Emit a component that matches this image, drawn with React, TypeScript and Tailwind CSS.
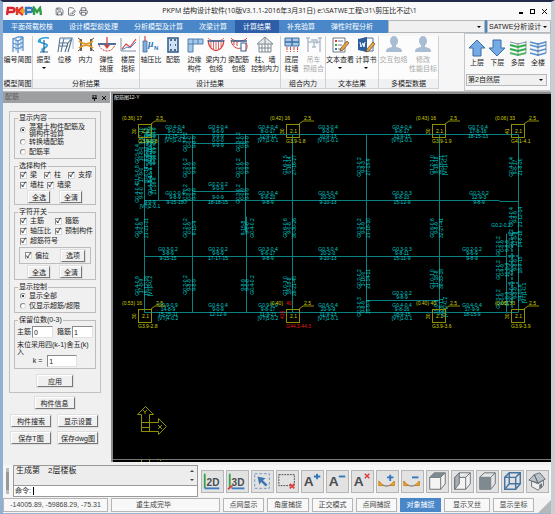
import { useState } from 'react'
import type { ReactNode } from 'react'
import { FilePenLine, Printer, Save } from 'lucide-react'
import clsx from 'clsx'

const TABS = ['平面荷载校核', '设计模型前处理', '分析模型及计算', '次梁计算', '计算结果', '补充验算', '弹性时程分析']

const NAVY = '#37618f'
const RED = '#d8403c'

const ICONS: Record<string, ReactNode> = {
  frame: (
    <g fill="none" stroke="#5b93cc" strokeWidth="1.3">
      <path d="M4 2v14M9 4v13M14 1v14M4 3l5 2 5-3M4 7l5 2 5-3M4 11l5 2 5-3M4 3l5-2h5" />
      <path d="M7 2v13M12 1v13" strokeWidth=".7" />
    </g>
  ),
  mode: (
    <g fill="none">
      <path d="M14 2C7 1 1 4 5 6s10 2 6 5-6 2-2 5" stroke="#2aa3dd" strokeWidth="1.6" />
      <path d="M9 4v12M5 16h8" stroke={NAVY} strokeWidth="1.2" />
      <path d="M2 6l4-3v4z" fill="#2aa3dd" />
    </g>
  ),
  shift: (
    <g fill="none" stroke="#56718f" strokeWidth="1.1">
      <path d="M4 2h12l-4 14M4 2L2 16M8 2L5 16M16 2l-4 5H4M3 10h9M12 7l-3 9" />
      <path d="M6 3h11v10" stroke="#8ab2dd" strokeWidth=".8" />
    </g>
  ),
  force: (
    <g fill="none">
      <path d="M4 3v12M14 3v12" stroke="#554839" strokeWidth="1.6" />
      <path d="M2 5c5 4 9 4 14 0M2 12c5-4 9-4 14 0" stroke="#e09a28" strokeWidth="1.7" />
      <path d="M1 2l4 3M17 2l-4 3M1 15l4-3M17 15l-4-3" stroke="#554839" />
    </g>
  ),
  deflect: (
    <g fill="none">
      <path d="M0 8h18" stroke={NAVY} strokeWidth="1.8" />
      <path d="M9 1v10" stroke={RED} strokeWidth="1.3" />
      <path d="M6 9h6l-3 4z" fill={RED} />
      <path d="M1 9c3 8 13 8 16 0" stroke={RED} strokeDasharray="2 1" />
    </g>
  ),
  chart: (
    <g fill="none">
      <path d="M2 2v13h15" stroke="#7d8fa5" />
      <path d="M3 13l4-5 4 3 6-8" stroke={RED} strokeWidth="1.2" />
      <path d="M3 14l5-3 3 1 6-6" stroke="#4a87c7" />
    </g>
  ),
  axial: (
    <g>
      <rect x="1" y="5" width="4" height="11" fill="#7db0df" stroke={NAVY} strokeWidth=".7" />
      <path d="M3 0v5" stroke={RED} strokeWidth="1.2" />
      <text x="6" y="11" fontSize="10" fontStyle="italic" fontWeight="bold" fill="#2d78bf" className="font-['Liberation_Serif',serif]">μ</text>
      <text x="12" y="14" fontSize="6" fontWeight="bold" fill="#2d78bf" className="font-['Liberation_Sans',sans-serif]">N</text>
    </g>
  ),
  rebar: (
    <g>
      <rect x="4" y="2" width="10" height="14" fill="#cfe2f4" stroke={NAVY} strokeWidth="1.6" />
      <path d="M6 4h2M10 4h2M6 14h2M10 14h2M6 9h1M11 9h1" stroke="#26415e" strokeWidth="1.6" />
    </g>
  ),
  edge: (
    <g>
      <path d="M2 3h15v5H7v8H2z" fill="#a6c9ea" stroke="#4e7fae" />
      <path d="M7 3v5H2M12 3v5" fill="none" stroke="#4e7fae" />
    </g>
  ),
  envelope: (
    <g fill="none" stroke={RED}>
      <path d="M1 4c1 14 15 14 16 0" strokeWidth="1.3" />
      <path d="M4 5v6M6.500 5v8M9 5v8M11.500 5v8M14 5v6M1 2c2 4 14 4 16 0" strokeWidth=".8" />
      <path d="M1 5h16" stroke={NAVY} strokeWidth="1.5" />
    </g>
  ),
  envelopeBar: (
    <g fill="none" stroke={RED}>
      <path d="M1 4c1 9 10 11 13 5M4 5v4M7 5v5M1 2c2 4 14 4 16 0" />
      <path d="M1 5h16" stroke={NAVY} strokeWidth="1.5" />
      <rect x="11" y="7" width="5" height="8" fill="#fff" stroke={NAVY} />
      <path d="M16 7c2 3 1 6-1 8" />
    </g>
  ),
  house: (
    <g fill="none" stroke="#7e8993">
      <path d="M1 8l8-7 8 7z" fill="#e6e9ec" />
      <path d="M3 8v8h12V8M9 1v15M6 8v8M12 8v8M3 12h12" />
    </g>
  ),
  ground: (
    <g>
      <path d="M2 2h14v8H2z" fill="#a6c9ea" stroke="#3d6fa3" />
      <path d="M9 2v8M2 6h14" stroke="#3d6fa3" strokeWidth="1.4" />
      <path d="M4 11v5M7.500 11v5M11 11v5M14.500 11v5" stroke={RED} strokeDasharray="3 1" />
    </g>
  ),
  crane: (
    <g fill="none" stroke="#aebccb" strokeWidth="1.4">
      <path d="M3 2v14M15 2v14M1 2h4M13 2h4M3 6h12M6 4h6v4M9 6v5M7 11h4" />
    </g>
  ),
  notes: (
    <g>
      <path d="M2 2h12v14H2z" fill="#fff" stroke="#707b86" />
      <path d="M4 5h2" stroke={RED} strokeWidth="2" />
      <path d="M4 9h2" stroke="#3aa64a" strokeWidth="2" />
      <path d="M4 13h2" stroke="#3d78c0" strokeWidth="2" />
      <path d="M7 5h5M7 9h4M7 13h3" stroke="#707b86" />
      <path d="M16 5l2 2-6 7-3 1 1-3z" fill="#eda63b" stroke="#5b4a2e" strokeWidth=".7" />
    </g>
  ),
  word: (
    <g>
      <path d="M7 2h9v13H7z" fill="#fff" stroke="#4c6f9e" />
      <path d="M1 3l9-2v15l-9-2z" fill="#2d5f9f" />
      <path d="M3 6l1 5 2-4 1 4 1-5" fill="none" stroke="#fff" />
      <path d="M16 6l2 2-6 7-3 1 1-3z" fill="#eda63b" stroke="#5b4a2e" strokeWidth=".7" />
    </g>
  ),
  person: (
    <g fill="#a9bdd2">
      <ellipse cx="9" cy="5" rx="4" ry="5" />
      <path d="M7 8h4v3c4 1 6 1 6 5H1c0-4 2-4 6-5z" />
    </g>
  ),
  up: <path d="M9 1l8 8h-4v8H5V9H1z" fill="#74abe4" stroke="#3d6da3" />,
  down: <path d="M9 17l8-8h-4V1H5v8H1z" fill="#74abe4" stroke="#3d6da3" />,
  layers: (
    <g fill="none" strokeWidth="2">
      <path d="M1 3l8 2 8-2" stroke="#7e95a5" strokeWidth="1" />
      <path d="M1 6l8 2 8-2M1 10l8 2 8-2" stroke="#2fae4b" />
      <path d="M1 14l8 2 8-2" stroke="#54b668" />
      <path d="M9 4v13M17 2v12" stroke="#5b7a68" strokeWidth=".7" />
    </g>
  ),
  floors: (
    <g fill="none" stroke="#5d94cd" strokeWidth="1.8">
      <path d="M1 3l8 2 8-2M1 6l8 2 8-2M1 10l8 2 8-2M1 14l8 2 8-2" />
      <path d="M9 4v13M17 2v12" stroke="#46698f" strokeWidth=".7" />
    </g>
  ),
}

type Item = { icon: string; lines: string[]; width: string; menu?: boolean; disabled?: boolean }

const GROUPS: { title: string; items: Item[] }[] = [
  { title: '模型简图', items: [{ icon: 'frame', lines: ['编号简图'], width: 'w-[29px]' }] },
  {
    title: '分析结果',
    items: [
      { icon: 'mode', lines: ['振型'], width: 'w-[21px]', menu: true },
      { icon: 'shift', lines: ['位移'], width: 'w-[21px]' },
      { icon: 'force', lines: ['内力'], width: 'w-[21px]' },
      { icon: 'deflect', lines: ['弹性', '挠度'], width: 'w-[21px]' },
      { icon: 'chart', lines: ['楼层', '指标'], width: 'w-[22px]' },
    ],
  },
  {
    title: '设计结果',
    items: [
      { icon: 'axial', lines: ['轴压比'], width: 'w-[22px]' },
      { icon: 'rebar', lines: ['配筋'], width: 'w-[22px]' },
      { icon: 'edge', lines: ['边缘', '构件'], width: 'w-[21px]' },
      { icon: 'envelope', lines: ['梁内力', '包络'], width: 'w-[22px]' },
      { icon: 'envelopeBar', lines: ['梁配筋', '包络'], width: 'w-[23px]' },
      { icon: 'house', lines: ['柱、墙', '控制内力'], width: 'w-[30px]' },
    ],
  },
  {
    title: '组合内力',
    items: [
      { icon: 'ground', lines: ['底层', '柱墙'], width: 'w-[21px]' },
      { icon: 'crane', lines: ['吊车', '预组合'], width: 'w-[23px]', disabled: true },
    ],
  },
  {
    title: '文本结果',
    items: [
      { icon: 'notes', lines: ['文本查看'], width: 'w-[28px]', menu: true },
      { icon: 'word', lines: ['计算书'], width: 'w-[24px]', menu: true },
    ],
  },
  {
    title: '多模型数据',
    items: [
      { icon: 'person', lines: ['交互包络'], width: 'w-[29px]', disabled: true },
      { icon: 'person', lines: ['修改', '性能目标'], width: 'w-[30px]', disabled: true },
    ],
  },
]

const FLOORS = [
  { icon: 'up', label: '上层' },
  { icon: 'down', label: '下层' },
  { icon: 'layers', label: '多层' },
  { icon: 'floors', label: '全楼' },
]

const CUBE = 'M3 7l5-5h12v12l-5 6H3zM3 7h12l5-5M15 7v13'

const TOOLS: { label: string; icon: ReactNode }[] = [
  { label: '2D', icon: <><path d="M3 3v16" stroke="#39a24c" strokeWidth="2" /><path d="M3 19h16" stroke="#3b7cc0" strokeWidth="2" /><ToolText x={5} size={11}>2D</ToolText></> },
  { label: '3D', icon: <><path d="M3 3v15" stroke="#39a24c" strokeWidth="2" /><path d="M5 19h14" stroke="#3b7cc0" strokeWidth="2" /><path d="M1 20l5-4" stroke={RED} strokeWidth="2" /><ToolText x={5} size={11}>3D</ToolText></> },
  { label: '选择', icon: <><rect x="3" y="3" width="16" height="16" fill="none" stroke="#6d93be" strokeDasharray="3 2" /><path d="M6 6l9 2-3 2 5 5-2 2-5-5-2 3z" fill="#3f76b0" /></> },
  { label: '取消选择', icon: <><rect x="2" y="4" width="17" height="12" fill="none" stroke="#444" strokeDasharray="2 1" /><path d="M14 14l5 5M19 14l-5 5" stroke={RED} strokeWidth="2" /></> },
  { label: '放大文字', icon: <><ToolText x={2} size={15}>A</ToolText><path d="M13 6h7M16.500 3v6" stroke="#2e77bd" strokeWidth="2" /></> },
  { label: '缩小文字', icon: <><ToolText x={2} size={15}>A</ToolText><path d="M13 6h7" stroke="#2e77bd" strokeWidth="2" /></> },
  { label: '删除文字', icon: <><ToolText x={2} size={15}>A</ToolText><path d="M14 3l5 5M19 3l-5 5" stroke={RED} strokeWidth="1.600" /></> },
  { label: '放大图形', icon: <><path d="M6 15c3 2 6 2 9 0" stroke="#555" /><path d="M2 11l5 5H2zM19 11l-5 5h5z" fill="#f0a62c" stroke="#c08020" /><path d="M11 7h7M14.500 4v7" stroke="#2e77bd" strokeWidth="2" /></> },
  { label: '缩小图形', icon: <><path d="M6 15c3 2 6 2 9 0" stroke="#555" /><path d="M2 11l5 5H2zM19 11l-5 5h5z" fill="#f0a62c" stroke="#c08020" /><path d="M11 7h7" stroke="#2e77bd" strokeWidth="2" /></> },
  { label: '俯视', icon: <><path d={CUBE} fill="#f4f4f4" stroke="#63696e" /><path d="M3 7l5-5h12l-5 5z" fill="#7f8a90" /></> },
  { label: '左视', icon: <><path d={CUBE} fill="#f4f4f4" stroke="#63696e" /><path d="M3 7l5-5v12l-5 6z" fill="#a9b0b5" stroke="#63696e" /></> },
  { label: '前视', icon: <><path d={CUBE} fill="#e4e6e8" stroke="#63696e" /><path d="M3 7h12v13H3z" fill="#7f8a90" /></> },
  { label: '线框', icon: <><path d={CUBE} fill="none" stroke="#4774a3" strokeWidth="1.600" /><path d="M8 2v12h12M8 14l-5 6" fill="none" stroke="#4774a3" strokeWidth="1.600" /></> },
  { label: '轴测', icon: <><path d="M5 11l7 3 6-4v6l-6 5-7-4z" fill="#eef1f3" stroke="#63696e" /><path d="M2 10l6-6 4 9zM8 4l6-2 6 7-8 4z" fill="#b9c3ca" stroke="#63696e" /><path d="M14 15l2-1v4l-2 1z" fill="#7f8a90" stroke="#63696e" /></> },
]

const SNAPS = [
  { label: '点网显示', width: 'w-[41px]' },
  { label: '角度捕捉', width: 'w-[42px]' },
  { label: '正交模式', width: 'w-[41px]' },
  { label: '点网捕捉', width: 'w-[41px]' },
  { label: '对象捕捉', width: 'w-[41px]' },
  { label: '显示叉丝', width: 'w-[46px]' },
  { label: '显示坐标', width: 'w-[41px]' },
]

// beam and column axes of the plan: x1, y1, x2, y2
const AXES = [
  [144, 133, 518, 133], [192, 142, 246, 142], [192, 190, 246, 190], [144, 199, 499, 199], [499, 200, 518, 200],
  [144, 255, 506, 255], [366, 299, 439, 299], [144, 311, 518, 311],
  [144, 133, 144, 311], [158, 133, 158, 199], [192, 133, 192, 311], [245, 133, 245, 230], [246, 215, 246, 311],
  [292, 133, 292, 311], [366, 133, 366, 311], [439, 133, 439, 311], [506, 232, 506, 311], [518, 133, 518, 311],
]

type Mark = { x: number; y: number; rows: string[] }

const BEAMS: Mark[] = [
  { x: 175, y: 133, rows: ['G0.4-0.4', '9-0-15', '13-15-13', '[VT]1-0.1'] },
  { x: 218, y: 133, rows: ['G0.4-0.4', '9-6-9', '9-9-9'] },
  { x: 218, y: 142, rows: ['', '0-0-0', '9-9-9'] },
  { x: 268, y: 133, rows: ['G0.4-0.4', '8-0-17', '12-9-12', '[VT]1-0.1'] },
  { x: 328, y: 133, rows: ['G0.3-0.4', '9-0-0', '10-9-13', '[VT]1-0.1'] },
  { x: 402, y: 133, rows: ['G0.4-0.4', '9-8-17', '13-9-15', '[VT]1-0.1'] },
  { x: 478, y: 133, rows: ['G0.7-0.4', '17-8-16', '18-15-13'] },
  { x: 150, y: 199, rows: ['', '', '9-9-9', '[VT]2-0.1'] },
  { x: 175, y: 199, rows: ['G0.2-0.4', '9-8-9', '9-15-15'] },
  { x: 218, y: 190, rows: ['G0.2-0.2', '9-0-9', ''] },
  { x: 218, y: 199, rows: ['', '9-0-9', '18-18-15'] },
  { x: 268, y: 199, rows: ['G0.3-0.4', '9-8-20', '9-8-9'] },
  { x: 328, y: 199, rows: ['G0.3-0.4', '20-3-0', '9-10-13'] },
  { x: 402, y: 199, rows: ['G0.3-0.3', '9-8-10', '15-12-9'] },
  { x: 479, y: 199, rows: ['G0.2-0.2', '12-9-3', '9-8-9'] },
  { x: 168, y: 255, rows: ['G0.3-0.2', '3-8-9', '9-15-15'] },
  { x: 218, y: 255, rows: ['G0.2-0.2', '9-6-9', '17-17-15'] },
  { x: 268, y: 255, rows: ['G0.3-0.4', '9-6-17', '9-8-9'] },
  { x: 328, y: 255, rows: ['G0.3-0.4', '20-2-0', '9-10-13'] },
  { x: 402, y: 255, rows: ['G0.3-0.3', '9-8-11', '15-11-9'] },
  { x: 472, y: 255, rows: ['G0.2-0.2', '9-6-9', '9-8-9'] },
  { x: 168, y: 311, rows: ['G0.9-0.9', '14-8-9', '15-15-11', '[VT]4-0.2'] },
  { x: 218, y: 311, rows: ['G0.4-0.4', '9-0-9', '12-12-9'] },
  { x: 268, y: 311, rows: ['G0.9-0.9', '9-8-17', '11-9-21', '[VT]5-0.2'] },
  { x: 328, y: 311, rows: ['G0.6-0.4', '20-9-9', '11-9-13', '[VT]1-0.1'] },
  { x: 402, y: 299, rows: ['G0.2-0.2', '9-8-9'] },
  { x: 402, y: 311, rows: ['G0.4-0.4', '9-8-16', '18-9-15', '[VT]1-0.1'] },
  { x: 472, y: 311, rows: ['G0.4-0.4', '17-9-9', '18-15-9'] },
  { x: 501, y: 231, rows: ['G0.2-0.2'] },
]

const COLUMNS: Mark[] = [
  { x: 192, y: 141, rows: ['G0.3-0.2', '0-0-0', '9-9-9'] },
  { x: 245, y: 141, rows: ['G0.3-0.2', '0-0-0', '9-9-9'] },
  { x: 192, y: 167, rows: ['G0.2-0.2', '0-0-9', '9-9-9'] },
  { x: 245, y: 167, rows: ['G0.2-0.2', '0-0-9', '9-9-9'] },
  { x: 292, y: 164, rows: ['G1.6-1.5', '0-16-14', '27-16-27'] },
  { x: 366, y: 166, rows: ['G0.3-0.2', '9-8-3', '27-15-9'] },
  { x: 439, y: 164, rows: ['G1.2-1.0', '8-18-18', '35-16-21', '[VT]1-0.1'] },
  { x: 518, y: 166, rows: ['G0.4-0.4', '9-8-17', '21-8-20'] },
  { x: 192, y: 193, rows: ['G0.3-0.2', '0-0-9', '9-9-9'] },
  { x: 245, y: 193, rows: ['G0.3-0.2', '0-0-9', '9-9-9'] },
  { x: 144, y: 227, rows: ['G0.4-0.4', '9-0-9', '21-21-21'] },
  { x: 192, y: 227, rows: ['G0.2-0.2', '0-0-9', '9-15-9'] },
  { x: 250, y: 227, rows: ['9-15-8', '9-0-0', 'G0.4-0.2'] },
  { x: 292, y: 227, rows: ['G0.6-0.6', '9-0-8', '30-30-26'] },
  { x: 366, y: 227, rows: ['G0.3-0.2', '9-8-9', '21-18-10'] },
  { x: 439, y: 227, rows: ['G0.6-0.6', '9-8-9', '32-27-41'] },
  { x: 144, y: 285, rows: ['G0.4-0.9', '17-8-9', '19-12-18', '[VT]3-0.2'] },
  { x: 192, y: 284, rows: ['G0.2-0.2', '9-8-9', '9-8-9'] },
  { x: 250, y: 284, rows: ['9-8-9', '9-0-8', 'G0.4-0.2'] },
  { x: 292, y: 285, rows: ['G1.0-1.0', '18-18-8', '28-21-45'] },
  { x: 366, y: 278, rows: ['G0.2-0.2', '3-18-0', '21-14-11'] },
  { x: 366, y: 306, rows: ['G0.3-0.3', '9-8-9', '10-9-9'] },
  { x: 439, y: 278, rows: ['G1.0-1.0', '11-18-8', '38-33-18'] },
  { x: 439, y: 306, rows: ['', '18-9-9', '22-9-11', '[VT]2-0.2'] },
  // stair core, top left
  { x: 144, y: 135, rows: ['', '9-17-10', '20-14-9', '9-15-9'] },
  { x: 144, y: 153, rows: ['G0.5-0.4', '10-8-0', '9-8-17', '9-10-21'] },
  { x: 144, y: 174, rows: ['G1.5-0.8', '17-9-0', '10-0-14', '9-15-9'] },
  { x: 144, y: 192, rows: ['G0.4-0.4', '9-8-0'] },
  { x: 157, y: 135, rows: ['G0.4-0.4', '20-14-9'] },
  { x: 157, y: 155, rows: ['9-17-10', '9-10-21'] },
  { x: 157, y: 185, rows: ['G0.4-0.4', '21-16-9'] },
  // stair core, bottom right
  { x: 505, y: 245, rows: ['G0.2-0.2', '0-0-9', '9-8-9'] },
  { x: 505, y: 269, rows: ['G0.3-0.2', '0-9-9', '10-8-9'] },
  { x: 505, y: 298, rows: ['G0.3-0.2', '8-0-9', '14-8-9'] },
  { x: 518, y: 216, rows: ['G0.4-0.4', '9-8-9', '21-12-14'] },
  { x: 518, y: 238, rows: ['G0.2-0.2', '12-9-9', '14-8-18'] },
  { x: 518, y: 264, rows: ['G0.3-0.2', '9-8-9', '18-9-15'] },
  { x: 518, y: 292, rows: ['G0.9-0.2', '9-8-9', '14-10-9', '[VT]1-0.1'] },
]

const NODES = [
  { x: 138, y: 123, ratio: '(0.36) 17', side: '30', foot: 'G3.9-1.8' },
  { x: 286, y: 123, ratio: '(0.42) 16', side: '30', foot: 'G3.9-1.8' },
  { x: 432, y: 123, ratio: '(0.43) 16', side: '30', foot: 'G3.9-1.9' },
  { x: 511, y: 123, ratio: '(0.06) 33', side: '41', foot: 'G4.1-4.1' },
  { x: 138, y: 308, ratio: '(0.53) 16', side: '30', foot: 'G3.9-2.8' },
  { x: 286, y: 308, ratio: '(0.40)', side: '415', foot: 'G44.3-44.3', over: '40.' },
  { x: 432, y: 308, ratio: '(0.40) 40', side: '30', foot: 'G3.9-3.6' },
  { x: 511, y: 308, ratio: '(0.06) 33', side: '30', foot: 'G3.9-3.9' },
]

const ROW_SHIFT = [-5, -1, 4, 8]
const COLUMN_SHIFT = [-5, -1, 4, 8]

function ToolText({ x, size, children }: { x: number; size: number; children: string }) {
  return (
    <text x={x} y="16" fontSize={size} fontWeight="bold" fill="#4a4e52" className="font-['Liberation_Sans',sans-serif]">
      {children}
    </text>
  )
}

function Icon({ name }: { name: string }) {
  return (
    <svg viewBox="0 0 18 18" className="size-[18px] shrink-0" aria-hidden="true">
      {ICONS[name]}
    </svg>
  )
}

function Logo() {
  return (
    <svg viewBox="0 0 36 10" className="h-[10px] w-[36px]" fill="none" strokeWidth="2.400" role="img" aria-label="PKPM">
      <path d="M1 9l1-7h4c4 0 3 4 0 4H2" stroke="#d9232b" />
      <path d="M11 1v8M17 1l-5 4 5 4" stroke="#e0392a" />
      <path d="M14 5l3-3 3 3-3 3z" fill="#f0a11d" />
      <path d="M20 9V2h4c4 0 3 4 0 4h-4" stroke="#3276bd" />
      <path d="M28 9V2l3 4 3-4 1 7" stroke="#2f9c46" />
    </svg>
  )
}

function Combo({ label, options, className }: { label: string; options: string[]; className: string }) {
  return (
    <div className={clsx('relative border border-[#b4b8bc] bg-[#f0f0f0]', className)}>
      <select aria-label={label} className="block h-full w-full appearance-none px-px text-[7px] leading-[10px] outline-none">
        {options.map((o) => (
          <option key={o}>{o}</option>
        ))}
      </select>
      <span className="pointer-events-none absolute top-1/2 right-[3px] -translate-y-1/2 border-x-2 border-t-2 border-x-transparent border-t-black" />
    </div>
  )
}

function Check({ label }: { label: string }) {
  return (
    <label className="flex items-center gap-[3px] whitespace-nowrap">
      <input
        type="checkbox"
        defaultChecked
        className="flex size-[7px] shrink-0 appearance-none items-center justify-center border border-[#8a8a8a] border-r-[#d8d8d8] border-b-[#d8d8d8] bg-white text-[7px] leading-[6px] font-bold checked:before:content-['✓']"
      />
      {label}
    </label>
  )
}

function Radio({ name, children, checked }: { name: string; children: ReactNode; checked?: boolean }) {
  return (
    <label className="flex items-center gap-[3px] whitespace-nowrap">
      <input
        type="radio"
        name={name}
        defaultChecked={checked}
        className="flex size-[6px] shrink-0 appearance-none items-center justify-center rounded-full border border-[#8a8a8a] border-r-[#d8d8d8] border-b-[#d8d8d8] bg-white checked:before:size-[2px] checked:before:rounded-full checked:before:bg-black"
      />
      <span>{children}</span>
    </label>
  )
}

function PushButton({ children, className }: { children: string; className?: string }) {
  return (
    <button
      type="button"
      className={clsx(
        'h-[12px] border border-t-white border-r-[#777] border-b-[#777] border-l-white bg-[#f0f0f0] leading-[9px] whitespace-nowrap shadow-[0_0_0_1px_#dedede]',
        className,
      )}
    >
      {children}
    </button>
  )
}

function Group({ title, children }: { title: string; children: ReactNode }) {
  return (
    <fieldset className="min-w-0 border border-[#bdbdbd] pb-px leading-[10px]">
      <legend className="ml-[3px] px-px leading-[8px]">{title}</legend>
      {children}
    </fieldset>
  )
}

const FIELD = 'h-[12px] border border-[#8a8a8a] border-r-[#e2e2e2] border-b-[#e2e2e2] bg-white px-px outline-none'

function SettingsPanel() {
  return (
    <aside className="w-[107px] shrink-0 bg-[#f0f0f0] text-[7px] text-[#222]">
      <div className="flex h-[11px] items-center bg-[#9d9fa1] pr-[3px] pl-[2px] text-[#5d5f61]">
        <h2 className="flex-1">配筋</h2>
        <svg viewBox="0 0 16 6" className="h-[6px] w-[16px]" fill="none" stroke="#111">
          <path d="M2 0h3v3H2zM1 3.500h5M3.500 3v3M11 1l4 4M15 1l-4 4" />
        </svg>
      </div>

      <div className="mt-[8px] mr-[9px] ml-[6px] flex flex-col gap-[3px] border border-[#c2c2c2] px-[4px] pt-[2px] pb-[5px]">
        <Group title="显示内容">
          <div className="px-[5px] pt-px">
            <Radio name="content" checked>
              <span className="block leading-[7px]">混凝土构件配筋及<br />钢构件验算</span>
            </Radio>
            <Radio name="content">转换墙配筋</Radio>
            <Radio name="content">配筋率</Radio>
          </div>
        </Group>

        <Group title="选择构件">
          <div className="flex justify-between pr-[3px] pl-[5px]">
            <Check label="梁" />
            <Check label="柱" />
            <Check label="支撑" />
          </div>
          <div className="flex gap-[3px] pl-[5px]">
            <Check label="墙柱" />
            <Check label="墙梁" />
          </div>
          <div className="flex justify-around px-[8px] pt-px">
            <PushButton className="w-[22px]">全选</PushButton>
            <PushButton className="w-[22px]">全清</PushButton>
          </div>
        </Group>

        <Group title="字符开关">
          <div className="grid grid-cols-[35px_1fr] pl-[5px]">
            <Check label="主筋" />
            <Check label="箍筋" />
            <Check label="轴压比" />
            <Check label="预制构件" />
            <Check label="超筋符号" />
          </div>
          <div className="mx-[4px] mt-px flex h-[17px] items-center justify-between border border-[#bdbdbd] px-[5px]">
            <Check label="偏拉" />
            <PushButton className="w-[24px]">选项</PushButton>
          </div>
          <div className="flex justify-around px-[8px] pt-[2px]">
            <PushButton className="w-[22px]">全选</PushButton>
            <PushButton className="w-[22px]">全清</PushButton>
          </div>
        </Group>

        <Group title="显示控制">
          <div className="px-[5px]">
            <Radio name="range" checked>显示全部</Radio>
            <Radio name="range">仅显示超筋/超限</Radio>
          </div>
        </Group>

        <Group title="保留位数(0-3)">
          <div className="flex items-center justify-between px-[2px] pt-[2px]">
            <label className="flex items-center gap-px">
              主筋
              <input defaultValue="0" className={clsx(FIELD, 'w-[21px]')} />
            </label>
            <label className="flex items-center gap-px">
              箍筋
              <input defaultValue="1" className={clsx(FIELD, 'w-[21px]')} />
            </label>
          </div>
          <p className="px-[2px] pt-[3px] leading-[7px] whitespace-nowrap">
            末位采用四(k-1)舍五(k)
            <br />入
          </p>
          <label className="flex items-center justify-center gap-[5px]">
            k =
            <input defaultValue="1" className={clsx(FIELD, 'w-[30px]')} />
          </label>
        </Group>

        <PushButton className="mt-[3px] w-[36px] self-center border-t-[#ccc] border-l-[#ccc]">应用</PushButton>
      </div>

      <div className="mt-[4px] grid grid-cols-2 justify-items-center gap-x-[7px] gap-y-[5px] pr-[12px] pl-[8px]">
        <PushButton className="col-span-2 w-[40px] border-t-[#ccc] border-l-[#ccc]">构件信息</PushButton>
        <PushButton className="mt-px w-full">构件搜索</PushButton>
        <PushButton className="mt-px w-full border-t-[#999] border-l-[#999]">显示设置</PushButton>
        <PushButton className="w-full">保存T图</PushButton>
        <PushButton className="w-full">保存dwg图</PushButton>
      </div>
    </aside>
  )
}

function Plan() {
  return (
    <svg viewBox="113 94 438 366" className="block min-w-0 flex-1 font-['Liberation_Sans','Noto_Sans_CJK_SC',sans-serif] text-[5px]" role="img" aria-label="配筋平面图">
      <text x="114" y="98" fill="#e8e8e8">配筋图12-Y</text>
      <g stroke="#0b8080" strokeWidth="1">
        {AXES.map(([x1, y1, x2, y2], i) => (
          <line key={i} x1={x1 + 0.5} y1={y1 + 0.5} x2={x2 + 0.5} y2={y2 + 0.5} />
        ))}
      </g>
      <g fill="#00d0d0" textAnchor="middle">
        {BEAMS.map((m, i) =>
          m.rows.map((t, r) => t && (
            <text key={`${i}-${r}`} x={m.x} y={m.y + ROW_SHIFT[r]}>{t}</text>
          )),
        )}
        {COLUMNS.map((m, i) => (
          <g key={i} transform={`translate(${m.x} ${m.y}) rotate(-90)`}>
            {m.rows.map((t, r) => t && (
              <text key={r} y={COLUMN_SHIFT[r]}>{t}</text>
            ))}
          </g>
        ))}
      </g>
      <path d="M147 130v38M151 134v58M154 134v30M512 232v76M508 282h10M508 232h10M508 255h10" stroke="#00c4c4" strokeDasharray="3 1" />

      {NODES.map((n) => (
        <g key={`${n.x}-${n.y}`} fill="#d0d000">
          <rect x={n.x + 0.5} y={n.y + 0.5} width="13" height="13" fill="none" stroke="#8f8f00" />
          <path d={`M${n.x + 13} ${n.y}l4-3h11`} fill="none" stroke="#8f8f00" />
          <text x={n.x - 16} y={n.y - 4}>{n.ratio}</text>
          {n.over && <text x={n.x} y={n.y - 4} fill="#e01818">{n.over}</text>}
          <text x={n.x + 18} y={n.y - 4}>2.5</text>
          <text x={n.x + 4} y={n.y + 9}>2.1</text>
          <text transform={`translate(${n.x - 2} ${n.y + 10}) rotate(-90)`} fill={n.over ? '#e01818' : undefined}>{n.side}</text>
          <text x={n.x} y={n.y + 19} fill={n.over ? '#e01818' : undefined}>{n.foot}</text>
        </g>
      ))}

      <g fill="none" stroke="#8f8f00">
        <path d="M141.500 430.500v-17h-4l8-8 8 8h-4v17zM141.500 421.500h17v-4l8 8-8 8v-3h-17M141.500 426.500h8" />
        <path d="M143 409l2 2 2-2M145 411v2M158 424l4 4M162 424l-4 4M141.500 458v3M149.500 458v3M157 459l2-1 2 2" />
      </g>
      <path d="M113 458.500h438" stroke="#777" />
    </svg>
  )
}

export default function App() {
  const [tab, setTab] = useState('计算结果')
  const [snap, setSnap] = useState('对象捕捉')

  return (
    <div className="flex min-h-screen flex-col border-t-2 border-r-4 border-l-3 border-t-[#232a4a] border-r-[#c9ced4] border-l-[#8fb0d3] bg-[#f0f0f0] font-['Liberation_Sans','Noto_Sans_CJK_SC',sans-serif] text-[7px] text-[#222]">
      <header className="flex h-[18px] items-center bg-[#f9f9f9] pr-[4px] pl-[3px]">
        <Logo />
        <div className="flex items-center gap-[3px] pl-[13px]">
          <button type="button" aria-label="保存"><Save className="size-[9px] text-[#4b4f55]" /></button>
          <button type="button" aria-label="另存为"><FilePenLine className="size-[9px] text-[#4b4f55]" /></button>
          <button type="button" aria-label="打印"><Printer className="size-[9px] text-[#4b4f55]" /></button>
        </div>
        <h1 className="flex-1 text-center font-['Open_Sans','Noto_Sans_CJK_SC',sans-serif] text-[7px] whitespace-nowrap">
          PKPM 结构设计软件(10版V3.1.1-2016年3月31日) e:\SATWE工程\31\剪压比不过\1
        </h1>
        <div className="flex w-[56px] items-center justify-end gap-[7px]">
          <button type="button" aria-label="最小化" className="mt-[3px] h-[2px] w-[4px] bg-black" />
          <button type="button" aria-label="最大化" className="size-[5px] border border-black" />
          <button type="button" aria-label="关闭">
            <svg viewBox="0 0 5 5" className="size-[5px]" stroke="#111"><path d="M0 0l5 5M5 0L0 5" /></svg>
          </button>
        </div>
      </header>

      <nav className="flex h-[13px] bg-[#4a87c8]">
        {TABS.map((t) => (
          <button
            key={t}
            type="button"
            onClick={() => setTab(t)}
            className={clsx('px-[8px] leading-[13px] whitespace-nowrap text-white', t === tab && 'bg-[#2f5ea8]')}
          >
            {t}
          </button>
        ))}
        <div className="flex flex-1 justify-end gap-[2px]">
          <Combo label="工况" options={['']} className="w-[97px]" />
          <Combo label="模块" options={['SATWE分析设计']} className="w-[64px]" />
        </div>
      </nav>

      <div className="flex h-[59px] justify-between border-b border-[#b9b9b9] bg-[#f6f6f6]">
        <div className="flex pt-[3px] pb-[2px]">
          {GROUPS.map((g) => (
            <section key={g.title} className="flex flex-col border-r border-b border-[#cfd2d5] bg-[#fcfcfc]">
              <div className="flex flex-1">
                {g.items.map((it) => (
                  <button
                    key={it.lines.join('')}
                    type="button"
                    disabled={it.disabled}
                    className={clsx('flex flex-col items-center leading-[9px] whitespace-nowrap', it.width, it.disabled && 'text-[#a8a8a8]')}
                  >
                    <Icon name={it.icon} />
                    <span className="mt-px">{it.lines[0]}</span>
                    {it.lines[1] && <span>{it.lines[1]}</span>}
                    {it.menu && <span className="mt-[3px] border-x-2 border-t-2 border-x-transparent border-t-black" />}
                  </button>
                ))}
              </div>
              <h2 className="bg-[#f0f1f2] text-center leading-[9px]">{g.title}</h2>
            </section>
          ))}
        </div>

        <div className="flex w-[87px] flex-col justify-between border border-[#c4c7ca] bg-[#f8f8f8] px-px pb-[4px]">
          <div className="flex justify-between px-px pt-[5px]">
            {FLOORS.map((f) => (
              <button key={f.label} type="button" className="flex w-[20px] flex-col items-center gap-px leading-[9px]">
                <Icon name={f.icon} />
                {f.label}
              </button>
            ))}
          </div>
          <Combo label="楼层" options={['第2自然层']} className="mr-[2px] h-[12px]" />
        </div>
      </div>

      <main className="flex flex-1">
        <SettingsPanel />
        <div className="flex min-w-0 flex-1 flex-col pb-[3px] pl-px">
          <div className="flex flex-1 border-t-2 border-l-2 border-[#8b8b8b] bg-black">
            <Plan />
          </div>
        </div>
      </main>

      <div className="flex h-[32px] items-stretch bg-[#f6f6f6] pr-[2px] pl-[3px]">
        <div className="my-[3px] mr-[4px] w-[3px] border-y-4 border-[#bbb] bg-[#999]" />
        <div className="flex w-[185px] shrink-0 flex-col border border-[#9a9a9a]">
          <div className="flex flex-1 items-start justify-between bg-[#ededed] px-[2px]">
            <output className="text-[8px] leading-[10px] whitespace-pre">生成第　2层楼板</output>
            <div className="flex h-full flex-col items-center justify-around pr-px">
              <span className="border-x-2 border-b-2 border-x-transparent border-b-[#444]" />
              <span className="border-x-2 border-t-2 border-x-transparent border-t-[#444]" />
            </div>
          </div>
          <label className="flex h-[11px] items-center gap-[2px] border-t border-[#9a9a9a] bg-white px-px">
            命令:
            <input className="h-[8px] min-w-0 flex-1 border-l border-black outline-none" />
          </label>
        </div>
        <div className="flex flex-1 items-center justify-between pl-[3px]">
          {TOOLS.map((t) => (
            <button key={t.label} type="button" aria-label={t.label} className="size-[23px] border border-[#b5b5b5] bg-[#e2e2e2]">
              <svg viewBox="0 0 23 23" className="size-[21px]" fill="none">{t.icon}</svg>
            </button>
          ))}
        </div>
      </div>

      <footer className="flex h-[17px] items-center gap-[3px] border-b border-[#9bb4cf] bg-[#f3f3f3] text-[#444]">
        <div className="h-[14px] w-[105px] border border-[#b5b5b5] bg-[#f8f8f8] text-center leading-[12px]">
          -14005.89, -59868.29, -75.31
        </div>
        <div className="h-[14px] min-w-0 flex-1 border border-[#b5b5b5] bg-[#f8f8f8] pr-[24px] text-center leading-[12px]">重生成完毕</div>
        {SNAPS.map((s) => (
          <button
            key={s.label}
            type="button"
            onClick={() => setSnap(s.label)}
            className={clsx(
              'h-[14px] border leading-[12px] whitespace-nowrap',
              s.width,
              s.label === snap ? 'border-[#4a87c8] bg-[#4a87c8] text-white' : 'border-[#b5b5b5] bg-[#f8f8f8]',
            )}
          >
            {s.label}
          </button>
        ))}
        <svg viewBox="0 0 14 14" className="size-[14px] self-end" fill="#b5b8bb"><path d="M14 1v13H1z" /></svg>
      </footer>
    </div>
  )
}
